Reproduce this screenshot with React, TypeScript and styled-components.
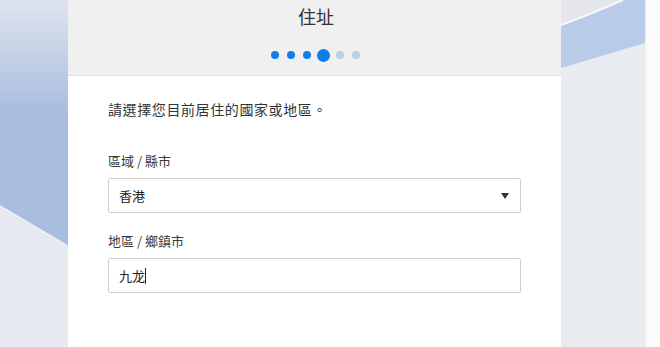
import styled, { createGlobalStyle } from 'styled-components';

const GlobalStyle = createGlobalStyle`
    html, body {
        margin: 0;
        padding: 0;
        background: #fbfbfb;
    }
    body {
        font-family: "Noto Sans CJK TC", "Noto Sans", sans-serif;
        color: #333;
    }
`;

const Page = styled.div`
    display: flex;
    width: 660px;
    height: 347px;
    overflow: hidden;
`;

const Band = styled.div<{ w: number }>`
    width: ${props => props.w}px;
    flex: none;
    height: 100%;
    svg {
        display: block;
        width: 100%;
        height: 100%;
    }
`;

const Edge = styled.div`
    flex: 1;
    background: #fbfbfb;
    border-left: 1px solid #eef0f2;
`;

const Card = styled.div`
    width: 493px;
    flex: none;
    background: #fff;
    display: flex;
    flex-direction: column;
`;

const Header = styled.div`
    height: 76px;
    box-sizing: border-box;
    background: #f0f0f0;
    border-bottom: 1px solid #e2e2e2;
    display: flex;
    flex-direction: column;
    align-items: center;
`;

const Title = styled.h2`
    margin: 4px 0 0;
    font-size: 18px;
    font-weight: 400;
    line-height: 24px;
    color: #333;
    padding-left: 3px;
`;

const Steps = styled.div`
    margin-top: 20px;
    height: 14px;
    display: flex;
    align-items: center;
    gap: 8px;
    padding-left: 2px;
`;

const Dot = styled.span<{ state: 'done' | 'current' | 'todo' }>`
    width: ${props => props.state === 'current' ? 13 : 8}px;
    height: ${props => props.state === 'current' ? 13 : 8}px;
    margin: 0 ${props => props.state === 'current' ? -2 : 0}px;
    border-radius: 50%;
    background: ${props => props.state === 'todo' ? '#bccfdf' : '#127de6'};
`;

const Body = styled.div`
    padding: 22px 40px 0;
    display: flex;
    flex-direction: column;
`;

const Intro = styled.p`
    margin: 0;
    font-size: 14px;
    line-height: 22px;
    letter-spacing: 0.6px;
    color: #333;
`;

const Label = styled.label<{ $first?: boolean }>`
    display: block;
    font-size: 13px;
    line-height: 18px;
    color: #3a3a3a;
    margin: ${props => props.$first ? 32 : 19}px 0 8px;
`;

const Field = styled.div`
    height: 35px;
    box-sizing: border-box;
    border: 1px solid #cfcfcf;
    border-radius: 2px;
    display: flex;
    align-items: center;
    justify-content: space-between;
    padding: 0 11px 0 10px;
    font-size: 13px;
    color: #222;
`;

const Value = styled.span`
    display: flex;
    align-items: center;
`;

const Caret = styled.span`
    width: 1px;
    height: 16px;
    background: #222;
`;

const Arrow = styled.span`
    width: 0;
    height: 0;
    border-left: 4px solid transparent;
    border-right: 4px solid transparent;
    border-top: 6px solid #333;
`;

const steps: ('done' | 'current' | 'todo')[] = ['done', 'done', 'done', 'current', 'todo', 'todo'];

export default function App() {
    return (
        <>
            <GlobalStyle />
            <Page>
                <Band w={68}>
                    <svg viewBox="0 0 68 347" preserveAspectRatio="none">
                        <defs>
                            <linearGradient id="lb" x1="0" y1="0" x2="0" y2="1">
                                <stop offset="0" stopColor="#dfe4ee" />
                                <stop offset="0.32" stopColor="#aabde0" />
                                <stop offset="1" stopColor="#a9bde2" />
                            </linearGradient>
                        </defs>
                        <rect x="0" y="0" width="68" height="347" fill="url(#lb)" />
                        <path d="M0 206 L68 246 L68 347 L0 347 Z" fill="#e6e9ef" />
                        <path d="M0 206 L68 246" stroke="#eef1f6" strokeWidth="1.5" />
                    </svg>
                </Band>
                <Card>
                    <Header>
                        <Title>住址</Title>
                        <Steps>
                            {steps.map((s, i) => <Dot key={i} state={s} />)}
                        </Steps>
                    </Header>
                    <Body>
                        <Intro>請選擇您目前居住的國家或地區。</Intro>
                        <Label $first>區域 / 縣市</Label>
                        <Field>
                            <Value>香港</Value>
                            <Arrow />
                        </Field>
                        <Label>地區 / 鄉鎮市</Label>
                        <Field>
                            <Value>九龙<Caret /></Value>
                        </Field>
                    </Body>
                </Card>
                <Band w={84}>
                    <svg viewBox="0 0 84 347" preserveAspectRatio="none">
                        <rect x="0" y="0" width="84" height="347" fill="#e8ebef" />
                        <path d="M0 0 L62 0 Q30 14 0 25 Z" fill="#e4e6ea" />
                        <path d="M0 25 Q30 14 62 0 L84 0 L84 43 L0 68 Z" fill="#b8cbe9" />
                        <path d="M0 25 Q30 14 62 0" stroke="#f7f8fa" strokeWidth="2" fill="none" />
                    </svg>
                </Band>
                <Edge />
            </Page>
        </>
    );
}
